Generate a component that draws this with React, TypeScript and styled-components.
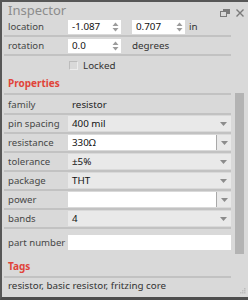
import React from 'react'
import styled, { createGlobalStyle } from 'styled-components'

const GlobalStyle = createGlobalStyle`
  html, body {
    margin: 0;
    padding: 0;
    background: #d9d9d9;
  }
  body {
    font-family: "Noto Sans", "Open Sans", sans-serif;
  }
`

const Spinner = () => (
  <svg width="7" height="10" viewBox="0 0 7 10">
    <polygon points="0.5,4 3.5,0.5 6.5,4" fill="#9c9c9c" />
    <polygon points="0.5,6 3.5,9.5 6.5,6" fill="#9c9c9c" />
  </svg>
)

const DownArrow = () => (
  <svg width="7" height="4" viewBox="0 0 7 4">
    <polygon points="0,0 7,0 3.5,4" fill="#8c8c8c" />
  </svg>
)

const FloatIcon = () => (
  <svg width="10" height="8" viewBox="0 0 10 8">
    <rect x="3" y="0" width="7" height="5" fill="#7a7a7a" />
    <rect x="0.5" y="2.5" width="6" height="5" fill="#d9d9d9" stroke="#7a7a7a" />
  </svg>
)

const CloseIcon = () => (
  <svg width="8" height="8" viewBox="0 0 8 8">
    <path d="M0.5 0.5 L7.5 7.5 M7.5 0.5 L0.5 7.5" stroke="#7a7a7a" strokeWidth="1.4" />
  </svg>
)

const GripIcon = () => (
  <svg width="7" height="7" viewBox="0 0 7 7">
    <rect x="5" y="0" width="1.5" height="1.5" fill="#bdbdbd" />
    <rect x="3" y="2" width="1.5" height="1.5" fill="#bdbdbd" />
    <rect x="5" y="2" width="1.5" height="1.5" fill="#bdbdbd" />
    <rect x="1" y="4" width="1.5" height="1.5" fill="#bdbdbd" />
    <rect x="3" y="4" width="1.5" height="1.5" fill="#bdbdbd" />
    <rect x="5" y="4" width="1.5" height="1.5" fill="#bdbdbd" />
  </svg>
)

type Prop = { label: string; kind: 'select' | 'combo'; value: string }

const props: Prop[] = [
  { label: 'pin spacing', kind: 'select', value: '400 mil' },
  { label: 'resistance', kind: 'combo', value: '330Ω' },
  { label: 'tolerance', kind: 'select', value: '±5%' },
  { label: 'package', kind: 'select', value: 'THT' },
  { label: 'power', kind: 'combo', value: '' },
  { label: 'bands', kind: 'select', value: '4' },
]

const App = () => {
  return (
    <>
      <GlobalStyle />
      <Frame>
        <TitleBar>
          <Title>Inspector</Title>
          <TitleIcons>
            <FloatIcon />
            <CloseIcon />
          </TitleIcons>
        </TitleBar>
        <Body>
          <Main>
            <Row $h={17} $sep>
              <Label>location</Label>
              <NumberBox>
                <span>-1.087</span>
                <Spinner />
              </NumberBox>
              <NumberBox $gap={11}>
                <span>0.707</span>
                <Spinner />
              </NumberBox>
              <Unit $gap={4}>in</Unit>
            </Row>
            <Row $h={17} $sep>
              <Label>rotation</Label>
              <NumberBox>
                <span>0.0</span>
                <Spinner />
              </NumberBox>
              <Unit $gap={11}>degrees</Unit>
            </Row>
            <LockedRow>
              <Checkbox />
              <Unit $gap={5}>Locked</Unit>
            </LockedRow>
            <SectionHeader $h={21}>Properties</SectionHeader>
            <Row $h={18} $sep>
              <Label>family</Label>
              <Plain>resistor</Plain>
            </Row>
            {props.map((p) => (
              <Row key={p.label} $h={17} $sep>
                <Label>{p.label}</Label>
                {p.kind === 'select' ? (
                  <Select>
                    <span>{p.value}</span>
                    <DownArrow />
                  </Select>
                ) : (
                  <Combo>
                    <ComboEdit>{p.value}</ComboEdit>
                    <ComboButton>
                      <DownArrow />
                    </ComboButton>
                  </Combo>
                )}
              </Row>
            ))}
            <Row $h={26}>
              <Label>part number</Label>
              <TextField />
            </Row>
            <SectionHeader $h={23}>Tags</SectionHeader>
            <TagsText>resistor, basic resistor, fritzing core</TagsText>
          </Main>
          <ScrollCol>
            <ScrollHandle />
          </ScrollCol>
        </Body>
        <Grip>
          <GripIcon />
        </Grip>
      </Frame>
    </>
  )
}

export default App

const Frame = styled.div`
  position: relative;
  width: 248px;
  height: 300px;
  box-sizing: border-box;
  border-top: 2px solid #575757;
  border-left: 2px solid #575757;
  border-bottom: 3px solid #4e4e4e;
  background: #d9d9d9;
  display: flex;
  flex-direction: column;
  overflow: hidden;
`
const TitleBar = styled.div`
  height: 16px;
  flex-shrink: 0;
  display: flex;
  align-items: center;
  justify-content: space-between;
  padding: 0 4px 0 6px;
`
const Title = styled.div`
  font-size: 13px;
  line-height: 16px;
  color: #8c8c8c;
`
const TitleIcons = styled.div`
  display: flex;
  align-items: center;
  gap: 6px;
  margin-top: 6px;
`
const Body = styled.div`
  flex: 1;
  display: flex;
  min-height: 0;
`
const Main = styled.div`
  width: 227px;
  margin-left: 2px;
  display: flex;
  flex-direction: column;
`
const Row = styled.div<{ $h: number; $sep?: boolean }>`
  height: ${(p) => p.$h}px;
  flex-shrink: 0;
  display: flex;
  align-items: center;
  border-bottom: ${(p) => (p.$sep ? '2px solid #c2c2c2' : 'none')};
`
const Label = styled.div`
  width: 64px;
  flex-shrink: 0;
  box-sizing: border-box;
  padding-left: 4px;
  font-size: 9.6px;
  color: #474747;
  white-space: nowrap;
`
const NumberBox = styled.div<{ $gap?: number }>`
  width: 53px;
  height: 14px;
  box-sizing: border-box;
  margin-left: ${(p) => p.$gap || 0}px;
  padding: 0 2px 0 4px;
  background: #fff;
  display: flex;
  align-items: center;
  justify-content: space-between;
  font-size: 9.8px;
  color: #111;
`
const Unit = styled.div<{ $gap?: number }>`
  margin-left: ${(p) => p.$gap || 0}px;
  font-size: 9.8px;
  color: #333;
`
const LockedRow = styled.div`
  height: 18px;
  flex-shrink: 0;
  display: flex;
  align-items: center;
  padding-left: 65px;
`
const Checkbox = styled.div`
  width: 9px;
  height: 9px;
  box-sizing: border-box;
  border: 1px solid;
  border-color: #bcbcbc #ececec #ececec #bcbcbc;
  background: #d9d9d9;
`
const SectionHeader = styled.div<{ $h: number }>`
  height: ${(p) => p.$h}px;
  flex-shrink: 0;
  box-sizing: border-box;
  display: flex;
  align-items: flex-end;
  padding: 0 0 3px 4px;
  border-bottom: 2px solid #c2c2c2;
  font-size: 10px;
  font-weight: bold;
  color: #e0443a;
`
const Plain = styled.div`
  padding-left: 4px;
  font-size: 9.8px;
  color: #222;
`
const Select = styled.div`
  flex: 1;
  height: 15px;
  box-sizing: border-box;
  padding: 0 4px;
  background: #e9e9e9;
  display: flex;
  align-items: center;
  justify-content: space-between;
  font-size: 9.8px;
  color: #111;
`
const Combo = styled.div`
  flex: 1;
  height: 15px;
  display: flex;
  background: #e9e9e9;
`
const ComboEdit = styled.div`
  flex: 1;
  background: #fff;
  border-right: 1px solid #a9a9a9;
  padding-left: 4px;
  display: flex;
  align-items: center;
  font-size: 9.8px;
  color: #111;
`
const ComboButton = styled.div`
  width: 14px;
  display: flex;
  align-items: center;
  justify-content: center;
`
const TextField = styled.div`
  flex: 1;
  height: 15px;
  background: #fff;
`
const TagsText = styled.div`
  height: 15px;
  display: flex;
  align-items: center;
  padding-left: 4px;
  font-size: 9.8px;
  color: #333;
  white-space: nowrap;
`
const ScrollCol = styled.div`
  width: 9px;
  margin-left: 4px;
  padding-top: 75px;
`
const ScrollHandle = styled.div`
  height: 161px;
  background: #b3b3b3;
`
const Grip = styled.div`
  position: absolute;
  right: 2px;
  bottom: 2px;
  display: flex;
`
